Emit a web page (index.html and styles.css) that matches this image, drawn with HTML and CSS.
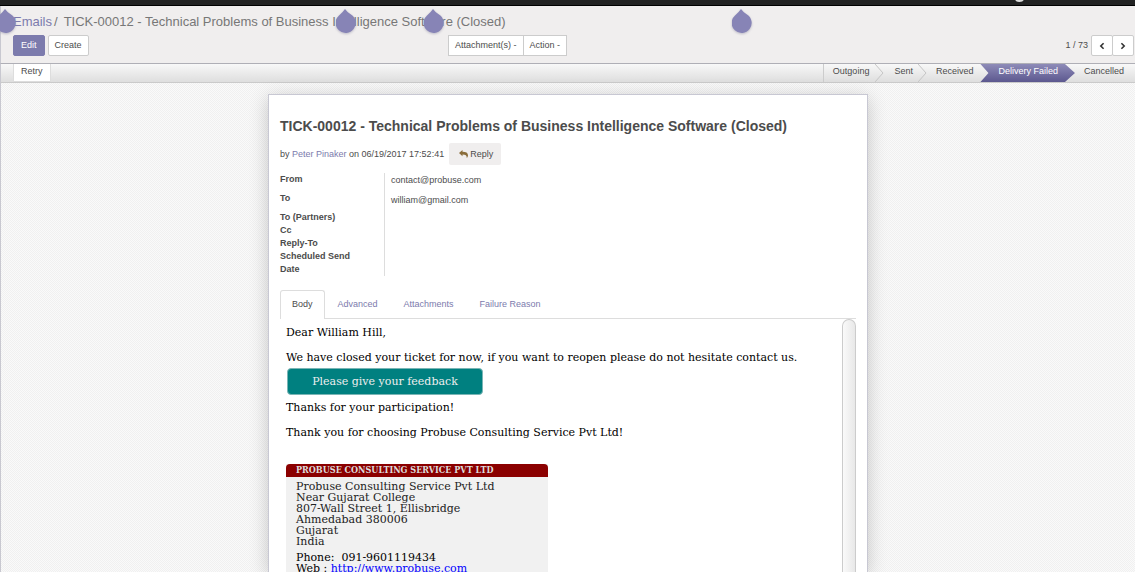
FILE: index.html
```html
<!DOCTYPE html>
<html lang="en">
<head>
<meta charset="utf-8">
<title>Emails</title>
<link rel="stylesheet" href="styles.css">
</head>
<body>
<div class="app">
  <div class="topbar"><span class="topbar-dot"></span></div>
  <header class="panel">
    <nav class="crumbs" aria-label="Breadcrumb"><a href="#">Emails</a><span class="slash">/</span><span>TICK-00012 - Technical Problems of Business Intelligence Software (Closed)</span></nav>
    <div class="toolbar">
      <div class="left"><button class="btn primary">Edit</button><button class="btn">Create</button></div>
      <div class="mid"><button class="btn">Attachment(s) -</button><button class="btn">Action -</button></div>
      <div class="right"><span class="count">1 / 73</span>
        <button class="btn arrow" aria-label="Previous"><svg width="12" height="12" viewBox="0 0 10 10"><path d="M7 1.500 3.500 5 7 8.500"/></svg></button><button class="btn arrow" aria-label="Next"><svg width="12" height="12" viewBox="0 0 10 10"><path d="M3 1.500 6.500 5 3 8.500"/></svg></button>
      </div>
    </div>
    <svg class="drop d1" viewBox="0 0 20 24"><path d="M9 0Q11 3 15 5.500A10 10 0 1 1 3 6.500Q7 3 9 0Z"/></svg>
    <svg class="drop d2" viewBox="0 0 20 24"><path d="M9 0Q11 3 15 5.500A10 10 0 1 1 3 6.500Q7 3 9 0Z"/></svg>
    <svg class="drop d3" viewBox="0 0 20 24"><path d="M9 0Q11 3 15 5.500A10 10 0 1 1 3 6.500Q7 3 9 0Z"/></svg>
    <svg class="drop d4" viewBox="0 0 20 24"><path d="M9 0Q11 3 15 5.500A10 10 0 1 1 3 6.500Q7 3 9 0Z"/></svg>
  </header>
  <div class="statusbar">
    <button class="retry">Retry</button>
    <ol class="steps">
      <li>Outgoing<svg class="chev" viewBox="0 0 10 18"><path d="M0 0 8 9 0 18"/></svg></li>
      <li>Sent<svg class="chev" viewBox="0 0 10 18"><path d="M0 0 8 9 0 18"/></svg></li>
      <li>Received</li>
      <li class="current">Delivery Failed</li>
      <li>Cancelled</li>
    </ol>
  </div>
  <main class="content">
    <article class="sheet">
      <h1>TICK-00012 - Technical Problems of Business Intelligence Software (Closed)</h1>
      <div class="byline"><span>by <a href="#">Peter Pinaker</a> on 06/19/2017 17:52:41</span><button class="reply"><svg width="9" height="8" viewBox="0 0 18 16"><path d="M0 6 7 0v3.500c7 0 11 2 11 7 0 2-1 4-2.500 5.500C16 11 13 9 7 9v3.500Z"/></svg>Reply</button></div>
      <div class="fields">
        <div class="labels"><div>From</div><div>To</div><div class="tight">To (Partners)</div><div class="tight">Cc</div><div class="tight">Reply-To</div><div class="tight">Scheduled Send Date</div></div>
        <div class="values"><div>contact@probuse.com</div><div>william@gmail.com</div></div>
      </div>
      <nav class="tabs"><a class="active" href="#">Body</a><a href="#">Advanced</a><a href="#">Attachments</a><a href="#">Failure Reason</a></nav>
      <div class="frame">
        <div class="mail">
          <p>Dear William Hill,</p>
          <p>We have closed your ticket for now, if you want to reopen please do not hesitate contact us.</p>
          <a class="feedback" href="#">Please give your feedback</a>
          <p>Thanks for your participation!</p>
          <p>Thank you for choosing Probuse Consulting Service Pvt Ltd!</p>
          <section class="card">
            <h2>PROBUSE CONSULTING SERVICE PVT LTD</h2>
            <div class="card-body">
              <address>Probuse Consulting Service Pvt Ltd<br>Near Gujarat College<br>807-Wall Street 1, Ellisbridge<br>Ahmedabad 380006<br>Gujarat<br>India</address>
              <div>Phone:&nbsp; 091-9601119434</div>
              <div>Web : <a href="#">http://www.probuse.com</a></div>
            </div>
          </section>
        </div>
        <div class="scroll"></div>
      </div>
    </article>
  </main>
</div>
</body>
</html>
```
FILE: styles.css
```css
* { box-sizing: border-box; }
body { margin: 0; font: 9px/13px "Liberation Sans", Arial, sans-serif; color: #4c4c4c; }
a { color: #7c7bad; text-decoration: none; }
button { font: inherit; color: inherit; margin: 0; }
.app { height: 100vh; overflow: hidden; display: flex; flex-direction: column; }
.topbar { position: relative; height: 6px; flex: none; background: #222; border-bottom: 1px solid #000; overflow: hidden; }
.topbar-dot { position: absolute; right: 111px; top: -5px; width: 9px; height: 7px; border-radius: 50%; background: #ddd; }
.panel { position: relative; flex: none; height: 58px; padding: 8px 1px 0 12px; background: #f0eeee; border-left: 1px solid #c8c8d0; border-bottom: 1px solid #afafb6; }
.crumbs { font-size: 13px; line-height: 16px; color: #777; white-space: nowrap; }
.slash { margin: 0 6px 0 2px; }
.toolbar { display: grid; grid-template-columns: 435px 1fr auto; margin-top: 5px; }
.left { display: flex; gap: 3px; }
.mid { display: flex; }
.mid .btn { border-radius: 0; }
.mid .btn + .btn { margin-left: -1px; }
.right { display: flex; align-items: center; }
.count { margin-right: 3px; }
.btn { height: 21px; padding: 0 6px; border: 1px solid #ccc; border-radius: 2px; background: #fff; white-space: nowrap; }
.primary { background: #7c7bad; border-color: #7c7bad; color: #fff; padding: 0 7px; }
.arrow { width: 22px; display: flex; align-items: center; justify-content: center; }
.arrow + .arrow { margin-left: -1px; }
.arrow path { fill: none; stroke: #333; stroke-width: 2; }
.drop { position: absolute; top: 3px; width: 20px; height: 24px; fill: #8784b6; filter: drop-shadow(0 1px 1px #8886a080); }
.d1 { left: -5px; }
.d2 { left: 335px; }
.d3 { left: 423px; }
.d4 { left: 731px; }
.statusbar { flex: none; height: 19px; display: flex; justify-content: space-between; padding-left: 12px; background: linear-gradient(#f8f8f8, #dedede); border-left: 1px solid #c8c8d0; border-bottom: 1px solid #cacaca; }
.retry { height: 18px; padding: 0 7px 3px; background: #fff; border: 1px solid #ddd; border-top: 0; }
.steps { list-style: none; display: flex; margin: 0; padding: 0; line-height: 15px; border-left: 1px solid #ccc; }
.steps li { position: relative; padding: 0 8px 0 9px; white-space: nowrap; }
.steps li + li { padding: 0 7px 0 17px; }
.steps li:nth-child(3) { padding-left: 16px; }
.chev { position: absolute; top: 0; right: -8px; width: 10px; height: 18px; fill: none; stroke: #c5c5c5; }
.steps li.current { padding: 0 17px 0 18px; color: #fff; background: linear-gradient(#8e8bb8, #5c588f); clip-path: polygon(0 0, calc(100% - 10px) 0, 100% 50%, calc(100% - 10px) 100%, 0 100%, 8px 50%); }
.steps li.current + li { padding: 0 11px 0 9px; }
.content { flex: 1; min-height: 0; padding-top: 11px; border-left: 1px solid #c8c8d0; background: repeating-conic-gradient(#fafafa 0 25%, #f0f0f0 0 50%) 0 0 / 2px 2px; }
.sheet { width: 600px; max-width: 100%; height: 100%; margin: 0 auto; padding: 21px 11px 0; background: #fff; border: 1px solid #c8c8d3; border-bottom: 0; box-shadow: 0 4px 18px #0003; display: flex; flex-direction: column; }
h1 { margin: 0; font-size: 14px; line-height: 20px; }
.byline { display: flex; align-items: center; margin-top: 7px; }
.reply { height: 22px; margin-left: 5px; padding: 0 8px 0 10px; background: #f0eeee; border: 0; border-radius: 2px; display: flex; align-items: center; gap: 2px; }
.reply svg { fill: #8a6d3b; }
.fields { display: flex; margin-top: 8px; }
.labels { width: 105px; padding-right: 30px; font-weight: bold; border-right: 1px solid #ddd; }
.labels div { margin-bottom: 6px; }
.labels .tight { margin-bottom: 0; }
.values { padding: 1px 6px; }
.values div { margin-bottom: 7px; }
.tabs { display: flex; margin-top: 14px; border-bottom: 1px solid #ddd; line-height: 27px; }
.tabs a { padding: 0 12px; border: 1px solid transparent; border-bottom: 0; border-radius: 3px 3px 0 0; }
.tabs .active { margin-bottom: -1px; padding: 0 11px; color: #4c4c4c; background: #fff; border-color: #ddd; }
.frame { flex: 1; min-height: 0; display: flex; overflow: hidden; }
.mail { flex: 1; padding: 7px 6px 0; font: 11px/13px "DejaVu Serif", serif; color: #000; }
.mail p { margin: 0 0 12px; }
.feedback { display: block; width: 196px; margin: -8px 0 6px 1px; line-height: 25px; text-align: center; color: #eee; background: #008080; border: 1px solid #7ab5b5; border-radius: 4px; }
.card { width: 262px; margin-top: 25px; background: #f1f1f1; }
.card h2 { margin: 0; padding: 0 10px; font-family: "DejaVu Serif Condensed", "DejaVu Serif", serif; font-size: 9px; line-height: 13px; color: #ddd; background: #8b0000; border-radius: 4px 4px 0 0; }
.card-body { padding: 4px 10px; line-height: 11px; }
.card address { font-style: normal; color: #222; margin-bottom: 5px; }
.card a { color: #00f; text-decoration: underline; }
.scroll { width: 14px; border: 1px solid #ccc; border-bottom: 0; border-radius: 7px 7px 0 0; background: linear-gradient(90deg, #fafafa, #e8e8e8); }
```
